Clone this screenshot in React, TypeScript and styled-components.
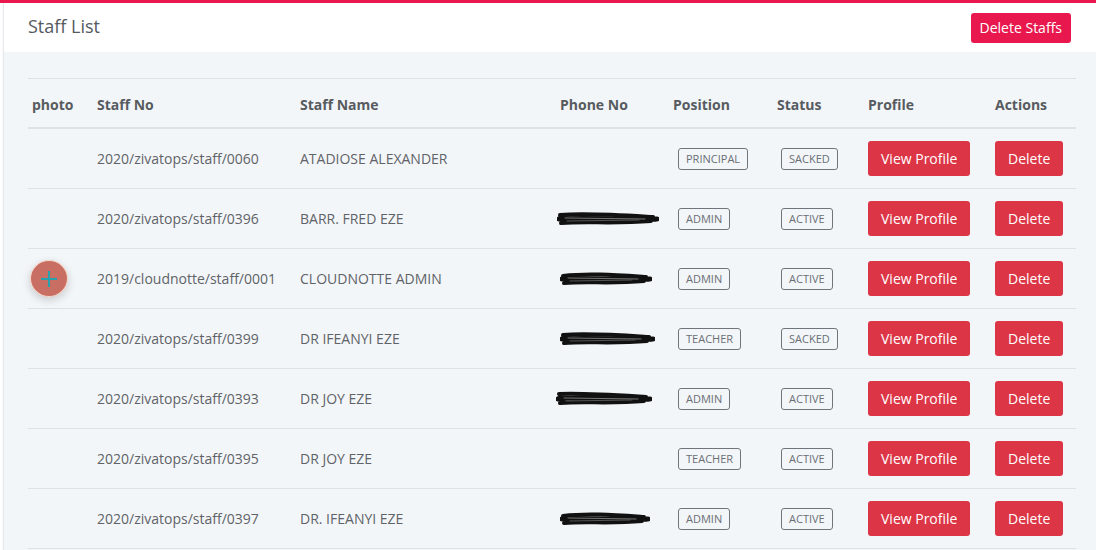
import React from "react";
import styled, { createGlobalStyle } from "styled-components";

const Global = createGlobalStyle`
  html, body { margin: 0; padding: 0; background: #fff; }
  body { font-family: "Open Sans", "Liberation Sans", sans-serif; }
  * { box-sizing: border-box; }
`;

const Page = styled.div`
  border-top: 3px solid #e8184e;
  width: 1096px;
  height: 550px;
  overflow: hidden;
`;

const Card = styled.div`
  margin-left: 3px;
  border-left: 1px solid #e6e9ed;
  box-shadow: -1px 0 2px rgba(0, 0, 0, 0.03);
  height: 100%;
`;

const Header = styled.div`
  height: 49px;
  background: #fff;
  display: flex;
  align-items: center;
  justify-content: space-between;
  padding: 0 25px 4px 24px;
`;

const Title = styled.h3`
  margin: 0;
  font-size: 18px;
  font-weight: 400;
  color: #555a5f;
`;

const TopButton = styled.button`
  height: 30px;
  padding: 0 9px;
  border: none;
  border-radius: 3px;
  background: #e8184e;
  color: #fff;
  font-family: inherit;
  font-size: 14px;
  margin-top: 4px;
`;

const Body = styled.div`
  background: #f3f6f9;
  padding: 26px 16px 0 24px;
  height: 100%;
`;

const cols = "65px 203px 260px 113px 104px 91px 127px 85px";

const Table = styled.div`
  width: 1048px;
  border-top: 1px solid #dee2e6;
`;

const HeadRow = styled.div`
  display: grid;
  grid-template-columns: ${cols};
  height: 50px;
  padding-top: 2px;
  align-items: center;
  border-bottom: 2px solid #dee2e6;
`;

const Th = styled.div<{ $pad?: number }>`
  padding-left: ${(p) => p.$pad ?? 4}px;
  font-size: 14px;
  font-weight: 700;
  color: #575b60;
`;

const Row = styled.div`
  display: grid;
  grid-template-columns: ${cols};
  height: 60px;
  align-items: center;
  border-bottom: 1px solid #dee2e6;
`;

const Td = styled.div<{ $pad?: number }>`
  padding-left: ${(p) => p.$pad ?? 4}px;
  font-size: 14px;
  color: #5f6368;
  white-space: nowrap;
  display: flex;
  align-items: center;
`;

const Badge = styled.span`
  display: inline-flex;
  align-items: center;
  height: 22px;
  padding: 0 7px;
  border: 1px solid #6f757a;
  border-radius: 3px;
  font-size: 11px;
  color: #6a6f74;
  text-transform: uppercase;
  margin-left: -1px;
`;

const RedButton = styled.button`
  height: 35px;
  padding: 0 13px;
  border: none;
  border-radius: 3px;
  background: #dc3545;
  color: #fff;
  font-family: inherit;
  font-size: 14px;
`;

const Avatar = styled.div`
  width: 38px;
  height: 37px;
  border-radius: 50%;
  background: #c86e63;
  border: 1px solid #f7d9c9;
  box-shadow: 0 3px 8px rgba(0, 0, 0, 0.18);
  display: flex;
  align-items: center;
  justify-content: center;
  margin-left: -2px;
`;

const Scribble = ({ w, v }: { w: number; v: number }) => (
  <svg width={w} height={18} viewBox={`0 0 ${w} 18`}>
    <g fill="none" stroke="#111" strokeLinecap="round" strokeLinejoin="round">
      <path d={`M3 ${5 + v} C ${w * 0.3} 3, ${w * 0.6} 5, ${w - 6} 7`} strokeWidth="4" />
      <path d={`M2 9 C ${w * 0.3} ${7 + v}, ${w * 0.6} 10, ${w - 2} 9`} strokeWidth="5" />
      <path d={`M4 13 C ${w * 0.3} 11, ${w * 0.55} 14, ${w - 8} 11`} strokeWidth="4" />
      <path d={`M3 7 L ${w * 0.4} 12 L ${w * 0.7} 6 L ${w - 4} 10`} strokeWidth="3" />
      <path d={`M8 8 L ${w - 14} 9`} strokeWidth="1" stroke="#777" />
      <path d={`M10 11 L ${w - 20} 10`} strokeWidth="0.8" stroke="#666" />
    </g>
  </svg>
);

type Staff = {
  no: string;
  name: string;
  phone?: { w: number; v: number; off: number };
  position: string;
  status: string;
  photo?: boolean;
};

const staff: Staff[] = [
  { no: "2020/zivatops/staff/0060", name: "ATADIOSE ALEXANDER", position: "Principal", status: "Sacked" },
  { no: "2020/zivatops/staff/0396", name: "BARR. FRED EZE", phone: { w: 102, v: 0, off: 1 }, position: "Admin", status: "Active" },
  { no: "2019/cloudnotte/staff/0001", name: "CLOUDNOTTE ADMIN", photo: true, phone: { w: 92, v: 1, off: 4 }, position: "Admin", status: "Active" },
  { no: "2020/zivatops/staff/0399", name: "DR IFEANYI EZE", phone: { w: 95, v: 0, off: 4 }, position: "Teacher", status: "Sacked" },
  { no: "2020/zivatops/staff/0393", name: "DR JOY EZE", phone: { w: 96, v: -1, off: 0 }, position: "Admin", status: "Active" },
  { no: "2020/zivatops/staff/0395", name: "DR JOY EZE", position: "Teacher", status: "Active" },
  { no: "2020/zivatops/staff/0397", name: "DR. IFEANYI EZE", phone: { w: 90, v: 1, off: 4 }, position: "Admin", status: "Active" },
];

export default function App() {
  return (
    <>
      <Global />
      <Page>
        <Card>
          <Header>
            <Title>Staff List</Title>
            <TopButton>Delete Staffs</TopButton>
          </Header>
          <Body>
            <Table>
              <HeadRow>
                <Th>photo</Th>
                <Th>Staff No</Th>
                <Th>Staff Name</Th>
                <Th>Phone No</Th>
                <Th>Position</Th>
                <Th>Status</Th>
                <Th>Profile</Th>
                <Th>Actions</Th>
              </HeadRow>
              {staff.map((s, i) => (
                <Row key={i}>
                  <Td>
                    {s.photo && (
                      <Avatar>
                        <svg width="18" height="18" viewBox="0 0 18 18">
                          <path d="M9 1v16M1 9h16" stroke="#2aa0ad" strokeWidth="2" />
                        </svg>
                      </Avatar>
                    )}
                  </Td>
                  <Td>{s.no}</Td>
                  <Td>{s.name}</Td>
                  <Td $pad={s.phone ? s.phone.off : 4}>
                    {s.phone && <Scribble w={s.phone.w} v={s.phone.v} />}
                  </Td>
                  <Td $pad={10}>
                    <Badge>{s.position}</Badge>
                  </Td>
                  <Td $pad={9}>
                    <Badge>{s.status}</Badge>
                  </Td>
                  <Td>
                    <RedButton>View Profile</RedButton>
                  </Td>
                  <Td>
                    <RedButton>Delete</RedButton>
                  </Td>
                </Row>
              ))}
            </Table>
          </Body>
        </Card>
      </Page>
    </>
  );
}
